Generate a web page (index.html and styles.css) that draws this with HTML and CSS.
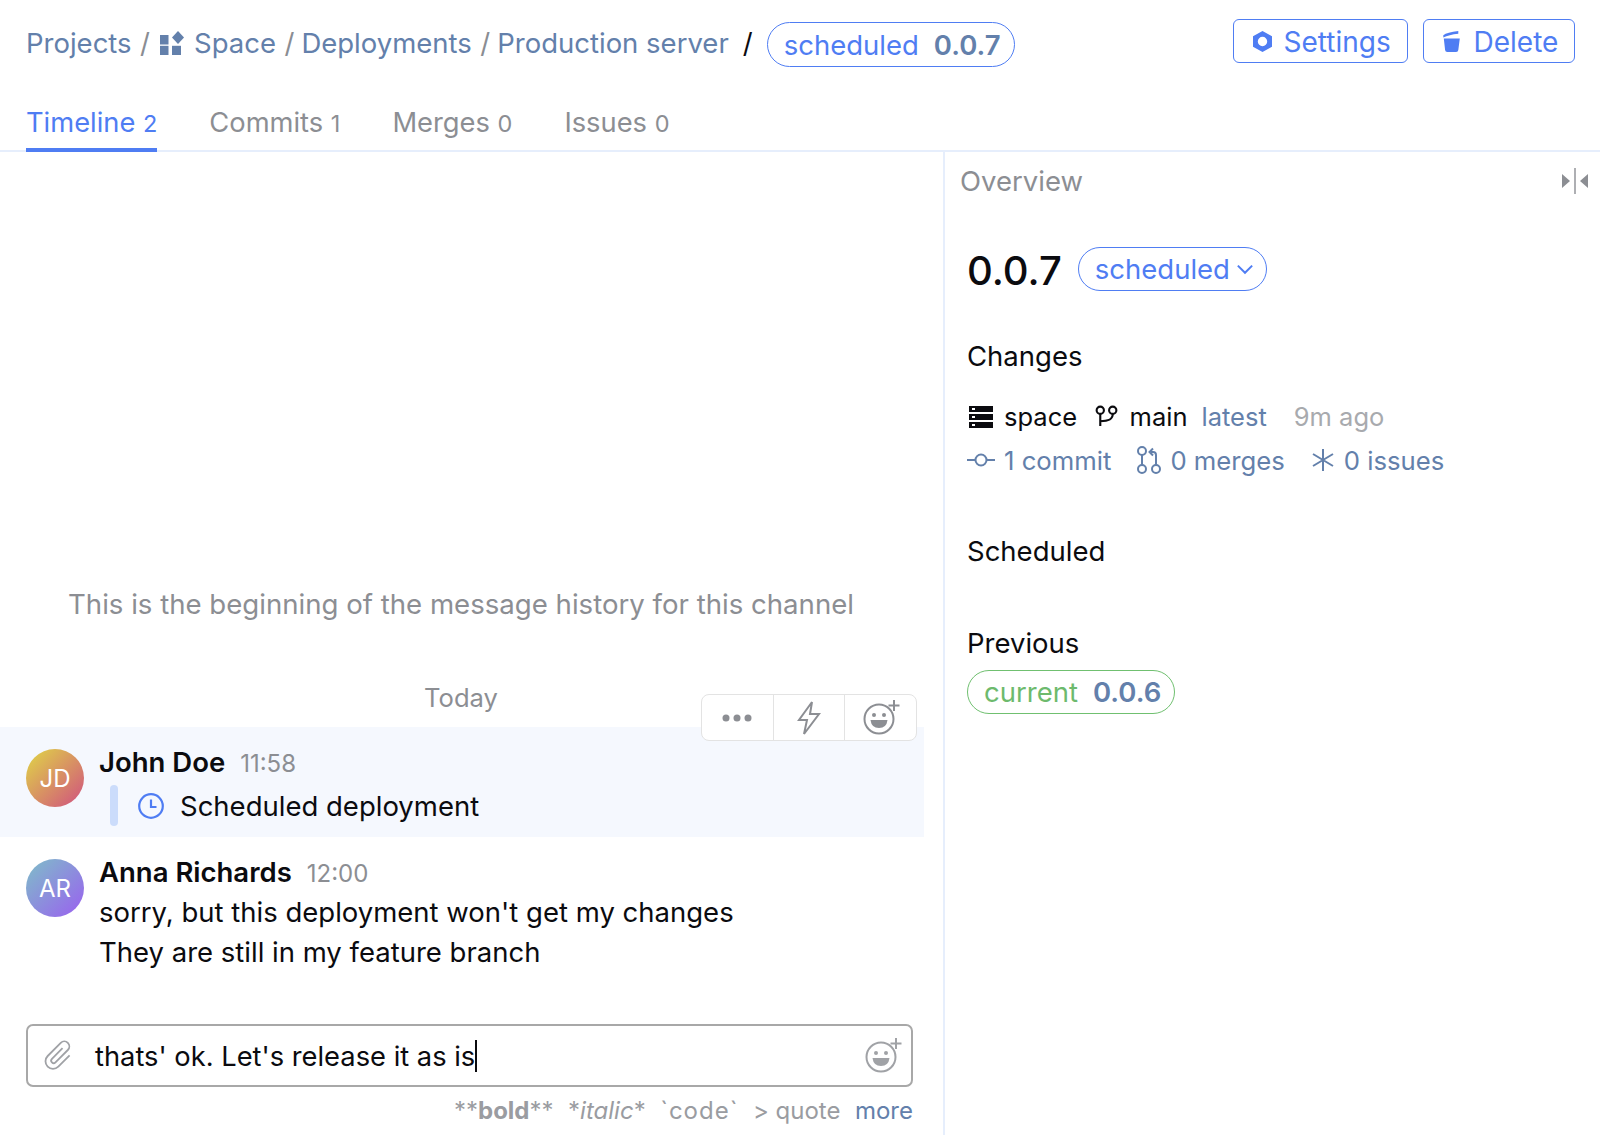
FILE: index.html
```html
<!DOCTYPE html>
<html lang="en">
<head>
<meta charset="utf-8">
<title>Production server</title>
<link rel="stylesheet" href="styles.css">
</head>
<body>
<div class="app">
  <header class="header">
    <nav class="crumbs">
      <span>Projects</span><span class="sep">/</span>
      <svg class="space-icon" viewBox="0 0 24 24"><rect x="0" y="4" width="8.500" height="9.500"/><rect x="0" y="14.800" width="8.500" height="9.200"/><rect x="12" y="14.800" width="9" height="9.200"/><path d="M18 0l6 6.500-6 6.500-6-6.500z"/></svg>
      <span>Space</span><span class="sep">/</span>
      <span>Deployments</span><span class="sep">/</span>
      <span>Production server</span>
      <span class="sep-dark">/</span>
      <span class="pill pill-top">scheduled<b>0.0.7</b></span>
    </nav>
    <div class="actions">
      <button class="btn btn-settings"><svg class="btn-icon" viewBox="0 0 19 21"><path fill-rule="evenodd" d="M9.500 0l9.500 5.250v10.500L9.500 21 0 15.750V5.250zM9.500 5.800a4.700 4.700 0 1 0 0 9.400 4.700 4.700 0 0 0 0-9.400z"/></svg>Settings</button>
      <button class="btn btn-delete"><svg class="btn-icon icon-trash" viewBox="0 0 17 21"><path d="M.3 4.200Q4 1.200 15.300 0v2.800Q6 3.800.3 6.500z"/><path d="M.8 7.500h16L15.300 19q-.2 2-2.200 2H4.300q-2 0-2.200-2z"/></svg>Delete</button>
    </div>
  </header>
  <nav class="tabs">
    <a class="tab tab-active">Timeline <small>2</small></a>
    <a class="tab">Commits <small>1</small></a>
    <a class="tab">Merges <small>0</small></a>
    <a class="tab">Issues <small>0</small></a>
  </nav>
  <main class="main">
    <section class="chat">
      <p class="history">This is the beginning of the message history for this channel</p>
      <p class="day">Today</p>
      <div class="msg msg-hover">
        <div class="toolbar">
          <span class="tool"><svg class="tool-dots" viewBox="0 0 30 8"><circle cx="4" cy="4" r="3.500"/><circle cx="15" cy="4" r="3.500"/><circle cx="26" cy="4" r="3.500"/></svg></span>
          <span class="tool"><svg class="tool-bolt" viewBox="0 0 24 36"><path d="M15 2L2 20h8l-3 14 15-20h-9z"/></svg></span>
          <span class="tool"><svg class="smile" viewBox="0 0 38 38"><circle cx="17" cy="21" r="14.500" fill="none" stroke-width="2"/><circle cx="12" cy="17" r="2" class="f"/><circle cx="22" cy="17" r="2" class="f"/><path d="M8.500 22h17q-1 8-8.500 8t-8.500-8z" class="f"/><path d="M32 2v11M26.500 7.500h11" fill="none" stroke-width="2"/></svg></span>
        </div>
        <div class="avatar av-jd">JD</div>
        <div class="body">
          <div class="meta"><strong>John Doe</strong><time>11:58</time></div>
          <div class="activity">
            <span class="bar"></span>
            <svg class="clock" viewBox="0 0 26 26"><circle cx="13" cy="13" r="11.800" fill="none" stroke-width="2.200"/><path d="M13 6.500V14h5.500" fill="none" stroke-width="2.200"/></svg>
            <span>Scheduled deployment</span>
          </div>
        </div>
      </div>
      <div class="msg">
        <div class="avatar av-ar">AR</div>
        <div class="body">
          <div class="meta meta-text"><strong>Anna Richards</strong><time>12:00</time></div>
          <p class="line">sorry, but this deployment won't get my changes</p>
          <p class="line">They are still in my feature branch</p>
        </div>
      </div>
      <div class="composer">
        <svg class="clip" viewBox="0 0 32 32"><path transform="rotate(45 16 16)" d="M13 8V23a2.500 2.500 0 0 0 5 0V5.500a5 5 0 0 0-10 0V24a7.500 7.500 0 0 0 15 0V8" fill="none" stroke-width="1.800"/></svg>
        <span class="draft">thats' ok. Let's release it as is<span class="caret"></span></span>
        <svg class="smile smile-input" viewBox="0 0 38 38"><circle cx="17" cy="21" r="14.500" fill="none" stroke-width="2"/><circle cx="12" cy="17" r="2" class="f"/><circle cx="22" cy="17" r="2" class="f"/><path d="M8.500 22h17q-1 8-8.500 8t-8.500-8z" class="f"/><path d="M32 2v11M26.500 7.500h11" fill="none" stroke-width="2"/></svg>
      </div>
      <div class="hints">
        <span>**<b>bold</b>**</span>
        <span>*<i>italic</i>*</span>
        <span class="code">`code`</span>
        <span>&gt; quote</span>
        <a>more</a>
      </div>
    </section>
    <aside class="side">
      <div class="side-head">
        <span>Overview</span>
        <svg class="collapse" viewBox="0 0 26 26"><path d="M0 6l8 7-8 7zM26 6l-8 7 8 7z"/><rect x="12.300" y="0" width="1.400" height="26"/></svg>
      </div>
      <div class="version">
        <span class="ver">0.0.7</span>
        <span class="pill pill-status">scheduled<svg class="chev" viewBox="0 0 16 10"><path d="M1.500 1.500L8 8l6.500-6.500" fill="none" stroke-width="1.800"/></svg></span>
      </div>
      <h3 class="heading h-changes">Changes</h3>
      <div class="row row-a">
        <svg class="ic-server" viewBox="0 0 24 22"><path fill-rule="evenodd" d="M0 0h24v6H0zM3 2v2h3V2zM0 8h24v6H0zM3 10v2h3v-2zM0 16h24v6H0zM3 18v2h3v-2z"/></svg>
        <span>space</span>
        <svg class="ic-branch" viewBox="0 0 24 24"><circle cx="5.500" cy="5.500" r="3.800"/><circle cx="18.500" cy="5.500" r="3.800"/><path d="M5.500 9.500V22M5.500 17c7 0 13-1 13-7.500"/></svg>
        <span>main</span>
        <a class="latest">latest</a>
        <span class="ago">9m ago</span>
      </div>
      <div class="row row-b">
        <span class="stat"><svg class="ic-commit" viewBox="0 0 28 14"><circle cx="14" cy="7" r="5.500"/><path d="M0 7h8.500M19.500 7H28"/></svg>1 commit</span>
        <span class="stat"><svg class="ic-merge" viewBox="0 0 24 28"><circle cx="5" cy="5" r="4"/><circle cx="5" cy="23" r="4"/><circle cx="19" cy="23" r="4"/><path d="M5 9v10M19 19V9q0-3-3-3h-2M16 2.500L12.500 6l3.500 3.500"/></svg>0 merges</span>
        <span class="stat"><svg class="ic-issue" viewBox="0 0 24 24"><path d="M12 1v22M2 6l20 12M22 6L2 18"/></svg>0 issues</span>
      </div>
      <h3 class="heading h-scheduled">Scheduled</h3>
      <h3 class="heading h-previous">Previous</h3>
      <span class="pill pill-current">current<b>0.0.6</b></span>
    </aside>
  </main>
</div>
</body>
</html>
```
FILE: styles.css
```css
* { box-sizing: border-box; }
html, body { margin: 0; height: 100%; overflow: hidden; background: #fff; }
body { font-family: Inter, "Liberation Sans", sans-serif; font-size: 27.500px; color: #0b0b0f; }
p, h3 { margin: 0; font-weight: 400; }
a { color: inherit; }
.app { width: 1600px; height: 1135px; display: flex; flex-direction: column; }

.header { height: 85px; padding: 19px 25px 0 26px; display: flex; justify-content: space-between; align-items: flex-start; }
.crumbs { display: flex; align-items: center; height: 48px; color: #6380ab; }
.crumbs .sep { margin: 0 7px 0 8.500px; color: #8a8d93; }
.crumbs .sep-dark { margin: 0 14px; color: #0b0b0f; }
.space-icon { width: 24px; height: 24px; fill: #6380ab; margin: 0 10px 0 3px; }
.pill { display: inline-flex; align-items: center; border: 1.500px solid #4f7df3; color: #4f7df3; border-radius: 23px; height: 45px; padding: 0 16px; }
.pill b { font-weight: 600; margin-left: 15px; color: #6380ab; }
.pill-top { width: 248px; white-space: nowrap; margin-top: 3px; }
.actions { display: flex; gap: 15px; }
.btn { display: flex; align-items: center; height: 44px; font: inherit; font-size: 28px; color: #4f7df3; background: #fff; border: 1.500px solid #4f7df3; border-radius: 6px; padding: 1px 0 0 18.500px; }
.btn-settings { width: 175px; }
.btn-delete { width: 152px; }
.btn-icon { flex: none; width: 19px; height: 21px; fill: #4f7df3; margin-right: 12px; }
.icon-trash { width: 17px; margin-right: 14px; }

.tabs { display: flex; gap: 52px; height: 67px; padding-left: 26px; border-bottom: 2px solid #e6eefc; font-size: 27.300px; }
.tab { height: 67px; padding-top: 21px; color: #8c8e93; border-bottom: 4px solid transparent; }
.tab small { font-size: 23.500px; }
.tab-active { color: #4f7df3; border-bottom-color: #4f7df3; }

.main { flex: 1; display: flex; min-height: 0; }
.chat { width: 943px; display: flex; flex-direction: column; }
.history { margin-top: 435px; text-align: center; color: #8c8e93; padding-right: 21px; height: 44px; font-size: 27.600px; }
.day { margin-top: 51px; text-align: center; color: #8c8e93; font-size: 25.600px; padding-right: 21px; height: 45px; }
.msg { position: relative; width: 924px; height: 110px; display: flex; padding: 22px 0 0 26px; }
.msg-hover { background: #f5f8fe; }
.toolbar { position: absolute; left: 701px; top: -33px; width: 216px; height: 47px; display: flex; background: #fff; border: 1.500px solid #e3e3e3; border-radius: 8px; }
.tool { flex: 1; display: flex; align-items: center; justify-content: center; border-right: 1.500px solid #e3e3e3; }
.tool:last-child { border-right: 0; }
.tool-dots { width: 30px; height: 8px; fill: #8c8e93; }
.tool-bolt { width: 24px; height: 36px; fill: none; stroke: #8c8e93; stroke-width: 2; }
.smile { flex: none; width: 38px; height: 38px; stroke: #8c8e93; margin-top: -2px; }
.smile .f { fill: #8c8e93; stroke: none; }
.smile-input { stroke: #a0a2a6; }
.smile-input .f { fill: #a0a2a6; }
.avatar { width: 58px; height: 58px; border-radius: 50%; flex: none; display: flex; align-items: center; justify-content: center; color: #fff; font-size: 24px; }
.av-jd { background: linear-gradient(135deg, #e0d845, #d04f80); }
.av-ar { background: linear-gradient(135deg, #7ebfc8, #9a5ff0); }
.body { margin-left: 15px; }
.meta { display: flex; align-items: baseline; height: 31px; margin-top: -4px; }
.meta strong { font-weight: 600; }
.meta time { margin-left: 15px; font-size: 24px; color: #8c8e93; }
.meta-text { margin-bottom: 6px; }
.activity { display: flex; align-items: center; margin-top: 9px; height: 41px; }
.bar { width: 8px; height: 41px; border-radius: 4px; background: #cbdcfb; margin-left: 11px; }
.clock { width: 26px; height: 26px; stroke: #4f7df3; margin-left: 20px; margin-right: 16px; }
.line { height: 40px; line-height: 40px; }
.composer { margin: 77px 0 0 26px; width: 887px; height: 63px; display: flex; align-items: center; border: 2px solid #a8a8a8; border-radius: 7px; padding: 0 9px 0 15px; }
.clip { width: 32px; height: 32px; stroke: #a0a2a6; flex: none; }
.draft { flex: 1; margin-left: 20px; padding-top: 2px; font-size: 27.300px; }
.caret { display: inline-block; width: 2px; height: 32px; background: #0b0b0f; vertical-align: -6px; }
.hints { display: flex; justify-content: flex-end; gap: 14.500px; width: 913px; margin-top: 9px; font-size: 24px; color: #9a9ca1; }
.hints a { color: #6380ab; }
.code { letter-spacing: 1px; }

.side { flex: 1; border-left: 2px solid #e6eefc; padding-left: 22px; padding-right: 12px; display: flex; flex-direction: column; align-items: flex-start; }
.side-head { width: calc(100% + 7px); display: flex; align-items: center; justify-content: space-between; height: 58px; margin-left: -7px; color: #8c8e93; }
.collapse { width: 26px; height: 26px; fill: #8c8e93; }
.version { display: flex; align-items: center; gap: 16px; margin-top: 34px; }
.ver { font-size: 40px; font-weight: 550; padding-top: 2px; }
.pill-status { width: 189px; height: 44px; gap: 6px; white-space: nowrap; margin-top: -1px; }
.chev { flex: none; width: 18px; height: 11px; stroke: #4f7df3; }
.heading { font-size: 27.500px; line-height: 34px; }
.h-changes { margin-top: 44px; }
.row { display: flex; align-items: center; height: 43.500px; font-size: 25.500px; }
.row-a { margin-top: 22px; }
.ic-server { flex: none; width: 24px; height: 22px; margin-right: 11px; margin-left: 2px; fill: #0b0b0f; }
.ic-branch { flex: none; width: 23px; height: 23px; margin: 0 12px 0 17.500px; fill: none; stroke: #0b0b0f; stroke-width: 2.200; }
.latest { margin-left: 14px; color: #6380ab; }
.ago { margin-left: 27px; color: #a8aaae; }
.row-b { color: #6380ab; gap: 26px; font-size: 25.700px; }
.stat { display: flex; align-items: center; gap: 9px; }
.ic-commit { flex: none; width: 28px; height: 14px; fill: none; stroke: #6380ab; stroke-width: 2; }
.ic-merge { flex: none; width: 24px; height: 28px; fill: none; stroke: #6380ab; stroke-width: 2; }
.ic-issue { flex: none; width: 24px; height: 24px; fill: none; stroke: #6380ab; stroke-width: 2; }
.h-scheduled { margin-top: 52px; }
.h-previous { margin-top: 58px; }
.pill-current { margin-top: 10px; width: 208px; height: 44px; border-color: #70c070; color: #6dba6d; white-space: nowrap; }
```
